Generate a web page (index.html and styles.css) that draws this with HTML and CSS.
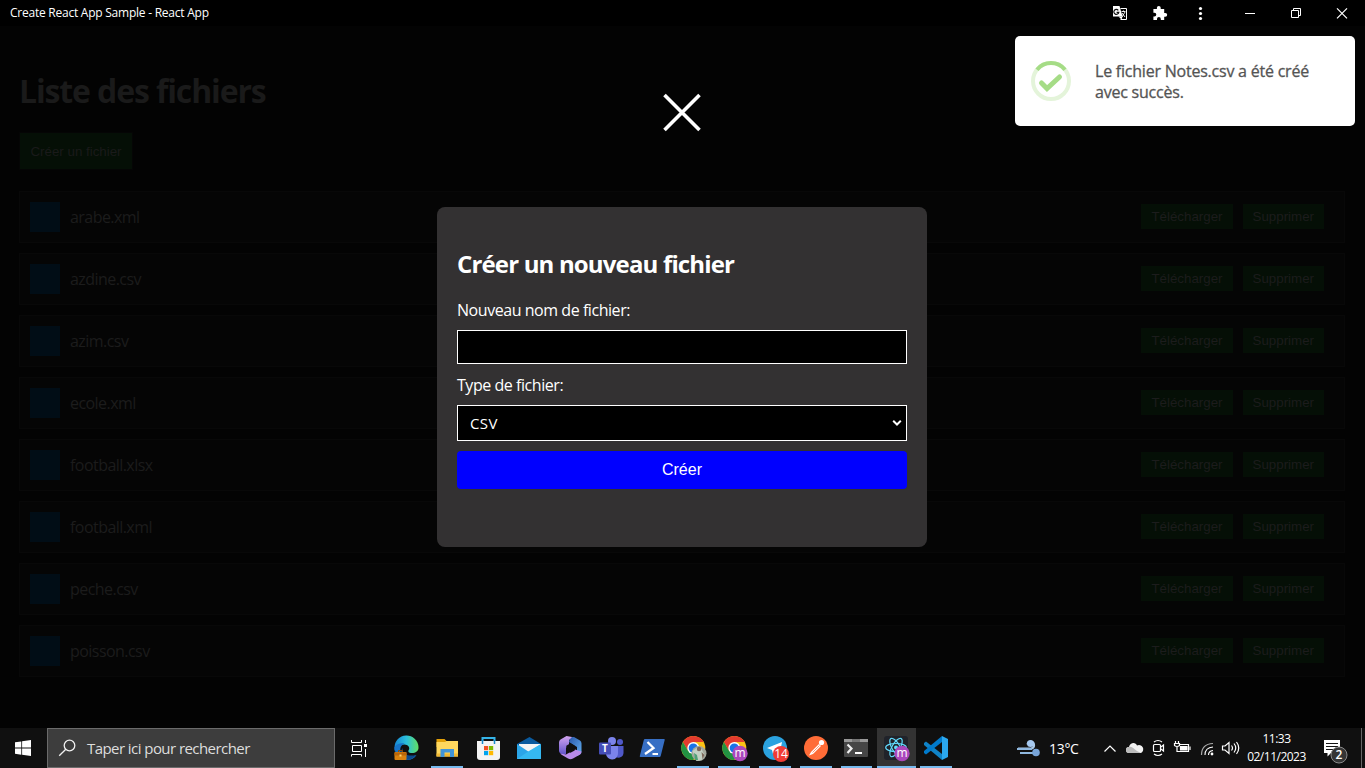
FILE: index.html
```
<!DOCTYPE html>
<html lang="fr">
<head>
<meta charset="utf-8">
<title>Create React App Sample - React App</title>
<link rel="stylesheet" href="styles.css">
</head>
<body>
<header class="titlebar">
  <span class="titlebar-text">Create React App Sample - React App</span>
  <div class="titlebar-tools">
    <svg width="40" height="26" viewBox="0 0 40 26"><path d="M20.500 8.500h6v11h-6" fill="#000" stroke="#fff"/><path d="M13 6h6.500l3 10.500H13z" fill="#fff"/><path d="M18.300 10.300a2.500 2.500 0 1 0 .5 2h-2.200" fill="none" stroke="#111" stroke-width="1.200"/><path d="M18.500 16.500h4l-1 3z" fill="#fff"/><path d="M21.500 11.500h4M23.500 10.500v1M22 17l3-5M22 13l3 4" stroke="#fff" stroke-width=".9"/></svg>
    <svg width="40" height="26" viewBox="0 0 40 26"><path d="M13.400 9h3.500V7.800a1.900 1.900 0 0 1 3.800 0V9h3.500v3.900h1.100a1.900 1.900 0 0 1 0 3.800h-1.100V20h-3.400v-1a1.900 1.900 0 0 0-3.800 0v1h-3.600v-3.500h1a1.900 1.900 0 0 0 0-3.800h-1z" fill="#fff"/></svg>
    <svg width="40" height="26" viewBox="0 0 40 26" fill="#fff"><circle cx="20.500" cy="8.500" r="1.600"/><circle cx="20.500" cy="13.500" r="1.600"/><circle cx="20.500" cy="18.500" r="1.600"/></svg>
    <svg width="46" height="26" viewBox="0 0 46 26"><path d="M20 13.500h10" stroke="#fff"/></svg>
    <svg width="46" height="26" viewBox="0 0 46 26" fill="none" stroke="#fff"><path d="M20.500 10.500h7v7h-7zM22.500 10.500v-2h7v7h-2"/></svg>
    <svg width="46" height="26" viewBox="0 0 46 26"><path d="M20 8.300l10 10M30 8.300l-10 10" stroke="#fff" stroke-width="1.200"/></svg>
  </div>
</header>

<main class="page">
  <h1 class="page-title">Liste des fichiers</h1>
  <button class="btn-new">Créer un fichier</button>
  <ul class="files">
    <li class="file"><i class="file-icon"></i><span class="file-name">arabe.xml</span><button class="btn">Télécharger</button><button class="btn">Supprimer</button></li>
    <li class="file"><i class="file-icon"></i><span class="file-name">azdine.csv</span><button class="btn">Télécharger</button><button class="btn">Supprimer</button></li>
    <li class="file"><i class="file-icon"></i><span class="file-name">azim.csv</span><button class="btn">Télécharger</button><button class="btn">Supprimer</button></li>
    <li class="file"><i class="file-icon"></i><span class="file-name">ecole.xml</span><button class="btn">Télécharger</button><button class="btn">Supprimer</button></li>
    <li class="file"><i class="file-icon"></i><span class="file-name">football.xlsx</span><button class="btn">Télécharger</button><button class="btn">Supprimer</button></li>
    <li class="file"><i class="file-icon"></i><span class="file-name">football.xml</span><button class="btn">Télécharger</button><button class="btn">Supprimer</button></li>
    <li class="file"><i class="file-icon"></i><span class="file-name">peche.csv</span><button class="btn">Télécharger</button><button class="btn">Supprimer</button></li>
    <li class="file"><i class="file-icon"></i><span class="file-name">poisson.csv</span><button class="btn">Télécharger</button><button class="btn">Supprimer</button></li>
  </ul>

  <div class="overlay">
    <svg class="close" width="40" height="40" viewBox="0 0 40 40"><path d="M2.500 3l35 35M37.500 3l-35 35" stroke="#fff" stroke-width="3.600"/></svg>
    <form class="modal">
      <h2 class="modal-title">Créer un nouveau fichier</h2>
      <label class="label label-name">Nouveau nom de fichier:</label>
      <input class="field" type="text">
      <label class="label label-type">Type de fichier:</label>
      <div class="select"><span>CSV</span><svg width="10" height="8" viewBox="0 0 10 8"><path d="M1.200 1.800L5 5.500l3.800-3.700" fill="none" stroke="#fff" stroke-width="2"/></svg></div>
      <button class="submit" type="button">Créer</button>
    </form>
  </div>
</main>

<aside class="toast">
  <svg width="40" height="40" viewBox="0 0 40 40" fill="none"><circle cx="20" cy="20" r="18" stroke="#a5dc86" stroke-opacity=".3" stroke-width="4"/><path d="M6 8.700a18 18 0 0 1 28 0" stroke="#a5dc86" stroke-width="4"/><path d="M10.500 22l5.500 5.500L28.500 16" stroke="#a5dc86" stroke-width="5" stroke-linecap="round"/></svg>
  <p class="toast-text">Le fichier Notes.csv a été créé<br>avec succès.</p>
</aside>

<footer class="taskbar">
  <svg width="47" height="40" viewBox="0 0 47 40" fill="#fff"><path d="M15 14.300l6.300-.9v6.200H15zM22.100 13.300l8.900-1.300v7.600h-8.900zM15 20.500h6.300v6.200l-6.300-.9zM22.100 20.500H31V28l-8.900-1.200z"/></svg>
  <div class="search">
    <svg width="39" height="38" viewBox="0 0 39 38" fill="none" stroke="#f0f0f0" stroke-width="1.300"><circle cx="21.500" cy="16.500" r="5.300"/><path d="M17.800 20.200l-6.600 6.600"/></svg>
    <span>Taper ici pour rechercher</span>
  </div>
  <svg width="51" height="40" viewBox="0 0 51 40" fill="none" stroke="#fff"><path d="M16.500 12v2.500h10V12M17.500 17.500h9v6h-9zM16.500 28.500v-2h10v2M30.500 12v3M30.500 21v8"/><path d="M29 16h3v3h-3z" fill="#fff" stroke="none"/></svg>
  <div class="apps">
    <div class="app"><svg width="41" height="40" viewBox="0 0 41 40"><defs><linearGradient id="eg"><stop stop-color="#1685d5"/><stop offset=".5" stop-color="#2bc0dc"/><stop offset="1" stop-color="#62df62"/></linearGradient></defs><path d="M8.500 20a12 12 0 0 1 24-1c.4 4-3 6-6.500 6s-4.500-1.500-3-3.500c1-2-1-5-4.500-5-5 0-10 3-10 8z" fill="url(#eg)"/><path d="M8.500 19c2-3 6-4.500 10-3.500-5 2-5.500 8-2 11s9 3 14 .500c-3 5-10 6.500-15 3.500-5-2.500-7-7-7-11.500z" fill="#1673c8"/><path d="M17 20c-2 6 5 9 13 7-3 5-10 6-14 3-3-3-2-7 1-10z" fill="#0b4a8c"/><rect x="8.500" y="24" width="12" height="8" rx="1" fill="#d9820f"/><path d="M8.500 24.500h12v3h-12z" fill="#b9660a"/><path d="M12.500 24v-1.500h4V24" fill="none" stroke="#8d4b05"/><path d="M13.500 26.500h2v2h-2z" fill="#ffd56e"/></svg></div>
    <div class="app open"><svg width="41" height="40" viewBox="0 0 41 40"><path d="M9.500 11h8l2 2h11v6h-21z" fill="#e3a008"/><path d="M9.500 14h8.500l1.500-1h11.500v15.500H9.500z" fill="#ffd75e"/><path d="M9.500 25.500h21.500v3H9.500z" fill="#f2b935"/><path d="M13.500 29v-8h13.500v8h-4v-4.500h-5.500V29z" fill="#4295d8"/></svg></div>
    <div class="app"><svg width="41" height="40" viewBox="0 0 41 40"><path d="M14.500 14v-4h12v4" fill="none" stroke="#35b4e8" stroke-width="2"/><path d="M9 13h23v16a3 3 0 0 1-3 3H12a3 3 0 0 1-3-3z" fill="#f3f3f3"/><path d="M14.500 12v4M26.500 12v4" stroke="#1689c9" stroke-width="1.500"/><path d="M16 18h4.200v4.200H16z" fill="#f25022"/><path d="M21 18h4.200v4.200H21z" fill="#7fba00"/><path d="M16 23h4.200v4.200H16z" fill="#00a4ef"/><path d="M21 23h4.200v4.200H21z" fill="#ffb900"/></svg></div>
    <div class="app"><svg width="41" height="40" viewBox="0 0 41 40"><path d="M8 16l12.500-7L32 16v5H8z" fill="#0a5a9e"/><path d="M10 16h21v10H10z" fill="#f4f4f4"/><path d="M8 16l12 8 12-8v15H8z" fill="#2ba5e8"/><path d="M8 31l12-8 12-7v15z" fill="#35b8f1"/></svg></div>
    <div class="app"><svg width="41" height="40" viewBox="0 0 41 40"><defs><linearGradient id="mg" x1="0" y1="0" x2="0" y2="1"><stop stop-color="#d3a4f0"/><stop offset="1" stop-color="#5c50c8"/></linearGradient><linearGradient id="mb" x1="0" y1="0" x2="1" y2="1"><stop stop-color="#2a56a8"/><stop offset="1" stop-color="#63b3f4"/></linearGradient></defs><path d="M20 9h4l6 3.500q1.500 1 1.500 3v8q0 2-1.500 3L27 28v-9l-8-5z" fill="url(#mb)"/><path d="M22 9l-3 3v6l-3 2v6l-3 1-3-2q-1-1-1-2.500v-8q0-2 1.500-3l6-3.500z" fill="url(#mg)"/><path d="M10 25.500l6 1 9-5 6.500 2q0 2-1.500 3l-7 4q-2.500 1.500-5 0l-6-3.500z" fill="#b98bea"/><path d="M20.500 15.300l4.200 2.400v4.700l-4.200 2.400-4.200-2.400v-4.700z" fill="#101010"/></svg></div>
    <div class="app"><svg width="41" height="40" viewBox="0 0 41 40"><circle cx="21" cy="13" r="4" fill="#7b83eb"/><circle cx="29" cy="14" r="3" fill="#5059c9"/><path d="M25 18h7.500v7a5 5 0 0 1-7.500 4z" fill="#5059c9"/><path d="M15 18h12v7a6 6 0 0 1-12 1z" fill="#7b83eb"/><rect x="8" y="14.500" width="12" height="12" rx="1" fill="#464eb8"/></svg><span class="teams-t">T</span></div>
    <div class="app"><svg width="41" height="40" viewBox="0 0 41 40"><path d="M12 11h20q1 0 .7 1l-4 16q-.3 1-1.200 1H8.500q-1 0-.7-1l4-16q.2-1 1.200-1" fill="#376fc4"/><path d="M15.500 14l6 6-8.500 6" fill="none" stroke="#fff" stroke-width="2.300"/><path d="M20.500 26H26" stroke="#fff" stroke-width="2"/></svg></div>
    <div class="app open"><svg width="41" height="40" viewBox="0 0 41 40"><use href="#chrome"/><circle cx="26" cy="25.500" r="7.500" fill="#a3a89d"/><path d="M19.500 23l4-3 5 1 3 6-3 5-5 1z" fill="#c3d0c4"/><circle cx="26" cy="21" r="2.200" fill="#7a655a"/><path d="M21 25l3 2 1 5h-3z" fill="#4f9f77"/><path d="M28.500 24l3 3-2 4z" fill="#7d685b"/></svg></div>
    <div class="app open"><svg width="41" height="40" viewBox="0 0 41 40"><g id="chrome"><circle cx="20.300" cy="20" r="12" fill="#fbc116"/><path d="M9.900 14a12 12 0 0 1 20.800 0H20.300l-5.200 9z" fill="#e33b2e"/><path d="M9.900 14a12 12 0 0 0 10.400 18l5.200-9H15.100z" fill="#229342"/><circle cx="20.300" cy="20" r="6" fill="#fff"/><circle cx="20.300" cy="20" r="4.600" fill="#1a73e8"/></g><circle cx="26" cy="25.500" r="7.700" fill="#ab47bc"/></svg><span class="avatar">m</span></div>
    <div class="app open"><svg width="41" height="40" viewBox="0 0 41 40"><circle cx="20" cy="20" r="12" fill="#2ba2df"/><path d="M12 20l15-6-2.500 13-4.500-3-2 2-1-4z" fill="#fff"/><circle cx="26" cy="26" r="8" fill="#f23c34"/></svg><span class="avatar count">14</span></div>
    <div class="app open"><svg width="41" height="40" viewBox="0 0 41 40"><circle cx="20" cy="20" r="12" fill="#ff6c37"/><path d="M13 27.500l2-3.500 8-8 2 2-8 8z" fill="#fff"/><circle cx="25.500" cy="14.500" r="2.600" fill="#fff"/><path d="M16.500 24.500l7-7" stroke="#ff6c37" stroke-width=".7"/></svg></div>
    <div class="app open terminal"><svg width="40" height="40" viewBox="0 0 40 40"><rect x="8" y="11" width="24" height="18" rx="1" fill="#464646"/><path d="M8 11h24v3H8z" fill="#999"/><path d="M16 11h8v3h-8z" fill="#777"/><path d="M11.500 16.500l4 4-4 4.500" fill="none" stroke="#eee" stroke-width="2.200"/><path d="M19 25h7" stroke="#fff" stroke-width="2"/></svg></div>
    <div class="app active"><svg width="39" height="40" viewBox="0 0 39 40"><rect x="7" y="8" width="24" height="24" rx="3" fill="#20232a"/><g fill="none" stroke="#61dafb" stroke-width="1.200"><ellipse cx="19" cy="19.500" rx="10.300" ry="4"/><ellipse cx="19" cy="19.500" rx="10.300" ry="4" transform="rotate(60 19 19.500)"/><ellipse cx="19" cy="19.500" rx="10.300" ry="4" transform="rotate(120 19 19.500)"/></g><circle cx="19" cy="19.500" r="2" fill="#61dafb"/><circle cx="25" cy="25.500" r="7.700" fill="#ab47bc"/></svg><span class="avatar">m</span></div>
    <div class="app open code"><svg width="40" height="40" viewBox="0 0 40 40"><path d="M8 15l2-1.500L26 26v6L8 17z" fill="#1083c7"/><path d="M8 25l2 1.500L26 14V8L8 23z" fill="#007acc"/><path d="M26 8l6 3v18l-6 3z" fill="#2ba8ef"/></svg></div>
  </div>
  <div class="tray">
    <svg width="24" height="40" viewBox="0 0 24 40" fill="none"><path d="M1 20.500h13a3.300 3.300 0 1 0-3.500-4" stroke="#a9c9e9" stroke-width="2.200"/><circle cx="13.500" cy="15.500" r="3.500" fill="#a5c8ef"/><path d="M0 21h15M3 25h14" stroke="#8fb7df" stroke-width="2"/><circle cx="19" cy="24.500" r="3.800" fill="#78a4d8"/></svg>
    <span class="temp">13°C</span>
    <svg class="tray-icons" width="140" height="40" viewBox="0 0 140 40" fill="none" stroke="#fff" stroke-width="1.200"><path d="M4.500 23.500l5.500-5.500 5.500 5.500"/><path d="M29 25a3 3 0 0 1 0-6c1-5 7-5 8-1.500a3.800 3.800 0 0 1 4 7.500z" fill="#f3f3f3" stroke="none"/><path d="M29 25a3 3 0 0 1 0-6c4-1 6 4 12 6z" fill="#bbb" stroke="none"/><rect x="53.500" y="16.500" width="7" height="7" rx="1"/><path d="M61 19l2.500-2v6L61 21M54 14q4-3 8 0M54 26q4 3 8 0"/><path d="M80 16.500h8.500v7H78"/><path d="M80.500 18.500h6.500v3.500h-6.500zM90 18.500v3.500" fill="#fff"/><path d="M75.500 13v2M78.500 13v2M74.500 15.500h5v2q-2.500 2-5 0zM77 19v4.500h2"/><circle cx="112" cy="26" r="1.400" fill="#fff" stroke="none"/><path d="M108.500 27q0-4 4.500-4.500M105 27q0-7.500 8-8" stroke-width="1.100"/><path d="M101.500 27q0-11 11.500-11.500" stroke="#aaa"/><path d="M122.500 18h2.500l4-3.500v11L125 22h-2.500zM131.500 17.500q2 2.500 0 5M134 15.500q3.500 4.500 0 9M136.500 14q4.500 6 0 12"/></svg>
    <div class="clock"><span>11:33</span><span>02/11/2023</span></div>
    <div class="notif"><svg width="30" height="40" viewBox="0 0 30 40"><path d="M1 12h16v13H8l-3.500 3.500V25H1z" fill="#fff"/><path d="M3 15.500h12M3 18.500h12M3 21.500h8" stroke="#151515" stroke-width="1.200"/><circle cx="16" cy="27" r="8" fill="#353535" stroke="#8a8a8a"/></svg><span class="notif-count">2</span></div>
  </div>
</footer>
</body>
</html>
```

FILE: styles.css
```
* { box-sizing: border-box; }
body {
  margin: 0;
  width: 1365px;
  height: 768px;
  display: flex;
  flex-direction: column;
  position: relative;
  overflow: hidden;
  background: #030303;
  color: #fff;
  font-family: "Open Sans", "Noto Sans", sans-serif;
}
svg { display: block; flex: none; }
button, input { font-family: "Liberation Sans", Arial, sans-serif; }

.titlebar {
  height: 26px;
  flex: none;
  background: #000;
  display: flex;
  align-items: center;
  justify-content: space-between;
  padding: 0 2px 0 10px;
}
.titlebar-text { font-size: 12px; line-height: 26px; letter-spacing: -0.24px; }
.titlebar-tools { display: flex; }
.titlebar-tools svg:nth-child(4) { margin-left: 5px; }

.page { flex: 1; position: relative; padding: 43px 20px 0 19px; }
.page-title {
  margin: 0 0 20px;
  font-size: 32px;
  line-height: 44px;
  font-weight: 700;
  letter-spacing: -1.13px;
  color: #1a1a1a;
}
.btn-new {
  display: block;
  width: 112px;
  height: 36px;
  margin-left: 1px;
  padding: 0;
  border: 0;
  background: #050f06;
  color: #1a1a1a;
  font-size: 13.333px;
  box-shadow: 0 0 0 1px #050505;
}
.files {
  list-style: none;
  margin: 22px 0 0;
  padding: 0;
  display: flex;
  flex-direction: column;
  gap: 10px;
}
.file {
  height: 52px;
  display: flex;
  align-items: center;
  padding: 0 10px;
  background: #050505;
  border: 1px solid #080808;
}
.file-icon { width: 30px; height: 30px; background: #010d16; margin-right: 10px; }
.file-name { flex: 1; font-size: 16px; letter-spacing: -0.55px; color: #1c1c1c; }
.btn {
  height: 25px;
  padding: 0 10px;
  margin: 0 10px 1px 0;
  border: 0;
  background: #050f06;
  color: #1c1c1c;
  font-size: 13.333px;
}

.overlay {
  position: absolute;
  inset: 0;
  display: flex;
  flex-direction: column;
  align-items: center;
  padding: 66px 1px 0 0;
}
.close { margin-bottom: 75px; }
.modal {
  width: 490px;
  height: 340px;
  padding: 40px 20px 0;
  border-radius: 8px;
  background: #333132;
  display: flex;
  flex-direction: column;
}
.modal-title { margin: 0; font-size: 24px; line-height: 34px; letter-spacing: -0.84px; }
.label { font-size: 16px; line-height: 22px; letter-spacing: -0.45px; }
.label-name { margin: 18px 0 9px; }
.label-type { margin: 10px 0 9px; }
.field { height: 34px; background: #000; border: 1px solid #fff; color: #fff; padding: 0 10px; }
.select {
  height: 36px;
  display: flex;
  align-items: center;
  justify-content: space-between;
  padding: 0 4px 0 12px;
  background: #000;
  border: 1px solid #fff;
  font-size: 15px;
  letter-spacing: 0.4px;
}
.submit {
  height: 38px;
  margin-top: 10px;
  border: 0;
  border-radius: 4px;
  background: #00f;
  color: #fff;
  font-size: 16px;
}

.toast {
  position: absolute;
  top: 36px;
  right: 10px;
  width: 340px;
  height: 90px;
  padding-left: 16px;
  display: flex;
  align-items: center;
  gap: 24px;
  border-radius: 5px;
  background: #fff;
}
.toast-text {
  margin: 2px 0 0;
  color: #545454;
  font-size: 16px;
  line-height: 21px;
  font-weight: 500;
  letter-spacing: -0.22px;
  -webkit-text-stroke: 0.3px #545454;
  white-space: nowrap;
}

.taskbar { height: 40px; flex: none; display: flex; background: #101010; }
.search {
  width: 288px;
  display: flex;
  align-items: center;
  background: #3d3d3d;
  border: 1px solid #6b6b6b;
  color: #ddd;
  font-size: 15px;
  letter-spacing: -0.56px;
}
.apps { display: flex; }
.app { position: relative; width: 41px; height: 40px; flex: none; }
.open::after {
  content: "";
  position: absolute;
  left: 4px;
  right: 5px;
  bottom: 0;
  height: 2px;
  background: #76b9ed;
}
.app.terminal { width: 40px; }
.app.terminal svg { margin-left: -1px; }
.app.active { width: 39px; background: #333; border-bottom: 2px solid #76b9ed; }
.app.code { width: 41px; }
.teams-t { position: absolute; left: 11px; top: 13px; font-size: 10px; line-height: 14px; font-weight: 700; }
.avatar { position: absolute; left: 18px; top: 17px; width: 16px; font-size: 12px; line-height: 15px; text-align: center; }
.count { top: 18px; font-size: 12px; font-weight: 500; line-height: 16px; }
.active .avatar { left: 17px; }

.tray { margin-left: auto; display: flex; align-items: center; width: 348px; }
.temp { width: 51px; padding-left: 8px; font-size: 14px; letter-spacing: -0.3px; white-space: nowrap; }
.tray-icons { margin-left: 8px; }
.clock {
  width: 75px;
  display: flex;
  flex-direction: column;
  align-items: center;
  margin-left: -1px;
  font-size: 12px;
  line-height: 18px;
  letter-spacing: -0.5px;
}
.notif { position: relative; margin-left: 9px; width: 39px; height: 40px; border-right: 1px solid #666; }
.notif-count { position: absolute; left: 8px; top: 19px; width: 16px; text-align: center; font-size: 12px; font-weight: 600; line-height: 16px; }
```
